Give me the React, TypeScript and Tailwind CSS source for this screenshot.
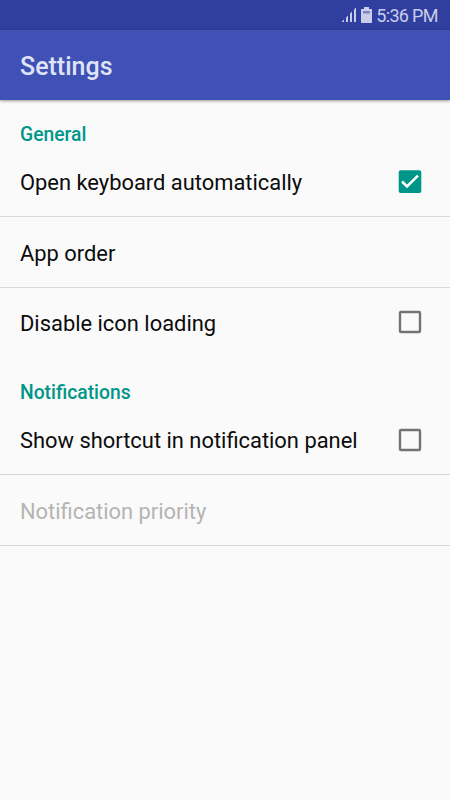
import React, { useState } from 'react';

type Pref = {
  id: string;
  label: string;
  checkable?: boolean;
  disabled?: boolean;
  divider?: boolean;
};

const GENERAL: Pref[] = [
  { id: 'keyboard', label: 'Open keyboard automatically', checkable: true, divider: true },
  { id: 'order', label: 'App order', divider: true },
  { id: 'icons', label: 'Disable icon loading', checkable: true },
];

const NOTIFICATIONS: Pref[] = [
  { id: 'shortcut', label: 'Show shortcut in notification panel', checkable: true, divider: true },
  { id: 'priority', label: 'Notification priority', disabled: true, divider: true },
];

const StatusBar: React.FC = () => (
  <div className="h-[30px] bg-[#303f9f] flex items-center justify-end pr-[13px] text-[#c9cdea]">
    {/* Signal */}
    <svg width="16" height="16" viewBox="0 0 16 16" className="mr-[4px]" fill="currentColor">
      <path d="M0.5 15L3 12.5V15z" />
      <path d="M5 10.5l2-2V15H5z" />
      <path d="M9 6.5l2-2V15H9z" />
      <path d="M13 2.5L15 0.5V15H13z" />
    </svg>
    {/* Battery */}
    <svg width="11" height="16" viewBox="0 0 11 16" className="mr-[4px]" fill="currentColor">
      <path d="M3 0h5v2h2.3q.7 0 .7.7v12.6q0 .7-.7.7H.7q-.7 0-.7-.7V2.7Q0 2 .7 2H3z" />
      <rect x="2" y="4" width="7" height="2.5" fill="#303f9f" fillOpacity="0.5" />
    </svg>
    <span className="text-[18px] leading-[30px] tracking-[-0.7px] pt-[2px] mr-[-0.7px]">5:36 PM</span>
  </div>
);

const Checkbox: React.FC<{ checked: boolean }> = ({ checked }) => (
  <svg width="24" height="24" viewBox="0 0 24 24" className="shrink-0 mt-px">
    {checked ? (
      <>
        <rect x="0.7" y="0.2" width="22.6" height="22.8" rx="2" fill="#009688" />
        <path d="M4 11.5l5 5L20 5.7" fill="none" stroke="#fff" strokeWidth="2.5" />
      </>
    ) : (
      <rect x="2" y="2" width="20" height="20" rx="1" fill="none" stroke="#737373" strokeWidth="2.4" />
    )}
  </svg>
);

const App: React.FC = () => {
  const [values, setValues] = useState<Record<string, boolean>>({ keyboard: true });

  const toggle = (pref: Pref) => {
    if (!pref.checkable || pref.disabled) return;
    setValues(prev => ({ ...prev, [pref.id]: !prev[pref.id] }));
  };

  const renderPref = (pref: Pref) => (
    <div
      key={pref.id}
      onClick={() => toggle(pref)}
      className={`flex items-center justify-between pl-5 pr-[28px] ${pref.divider ? 'h-[70.5px] border-b border-[#d8d8d8]' : 'h-[68px]'}`}
    >
      <span className={`pt-[5px] text-[21.9px] whitespace-nowrap ${pref.disabled ? 'text-[#b4b4b4]' : 'text-[#0c0c0c]'}`}>{pref.label}</span>
      {pref.checkable && <Checkbox checked={!!values[pref.id]} />}
    </div>
  );

  return (
    <div className="w-[450px] h-[800px] overflow-hidden bg-[#fafafa] font-[Roboto,sans-serif]">
      <StatusBar />
      <header className="h-[70px] bg-[#3f51b5] flex items-center pl-5 shadow-[0_1px_3px_rgba(0,0,0,0.4)]">
        <h1 className="pt-[4px] text-[25px] font-medium text-[#dfe3f7]">Settings</h1>
      </header>
      <main>
        <h2 className="h-[46.5px] pt-[21px] pl-5 text-[19.3px] leading-[28px] font-medium text-[#009688]">General</h2>
        {GENERAL.map(renderPref)}
        <h2 className="h-[49px] pt-[23px] pl-5 text-[19.3px] leading-[28px] font-medium text-[#009688]">Notifications</h2>
        {NOTIFICATIONS.map(renderPref)}
      </main>
    </div>
  );
};

export default App;
